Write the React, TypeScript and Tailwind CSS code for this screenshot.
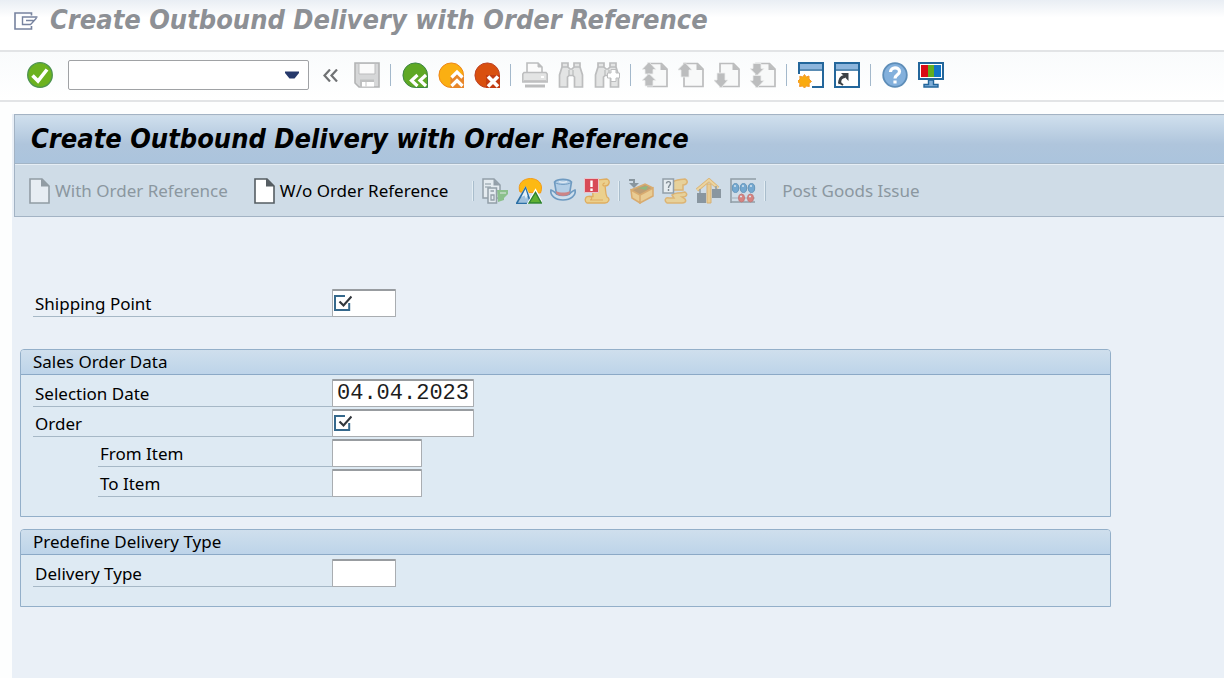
import type { ReactNode } from "react";

const GREY = "#bcbdbe";
const GREY_FILL = "#e3e4e4";

function Icon({ children, faded = false }: { children: ReactNode; faded?: boolean }) {
  return (
    <svg
      viewBox="0 0 26 26"
      aria-hidden="true"
      className={faded ? "block size-[26px] opacity-60" : "block size-[26px]"}
    >
      {children}
    </svg>
  );
}

function MenuIcon() {
  return (
    <svg viewBox="0 0 24 20" aria-hidden="true" className="h-5 w-6" fill="none" stroke="#77839f" strokeWidth="1.6">
      <path d="M17.5 4.500V2H1V18H17.5V15" />
      <path d="M23.5 6H8.500V13.500H16.500L18 12M12 9.500H19.500M18 12L22.500 7" strokeWidth="1.400" />
    </svg>
  );
}

function AcceptIcon() {
  return (
    <Icon>
      <circle cx="13" cy="13" r="12.3" fill="#6cb21f" stroke="#4d9350" strokeWidth="1.3" />
      <path d="M5.5 13.5L11 19L20 7.5" fill="none" stroke="#fff" strokeWidth="3.6" />
    </Icon>
  );
}

function SaveIcon() {
  return (
    <Icon>
      <path d="M1 1H25V25H5L1 21Z" fill="#d6d7d8" stroke="#b3b4b5" strokeWidth="1.6" />
      <path d="M5 1.5H21V12H5Z" fill="#fafafa" stroke="#bcbdbe" />
      <path d="M6 25V17.500H20V25Z" fill="#bfc0c1" />
      <path d="M8 20H20V24.500H8Z" fill="#fff" />
      <path d="M12 20V24.500" stroke="#c3c4c5" />
    </Icon>
  );
}

function BackIcon() {
  return (
    <Icon>
      <path d="M25.500 14A12.300 12.300 0 1 0 14 25.500H25.500Z" fill="#5fa824" stroke="#3d8545" />
      <path d="M15.500 13L9.500 18.500L15.500 24M24 13L18 18.500L24 24" fill="none" stroke="#fff" strokeWidth="3.200" />
    </Icon>
  );
}

function ExitIcon() {
  return (
    <Icon>
      <path d="M25.500 14A12.300 12.300 0 1 0 14 25.500H25.500Z" fill="#fbaf12" stroke="#ee8618" />
      <path d="M12.500 15L19 8L26 15V26H12.500Z" fill="#e8862a" />
      <path d="M13.500 15.500L19 10L24.500 15.500M13.500 24L19 18.500L24.500 24" fill="none" stroke="#fff" strokeWidth="3.200" />
    </Icon>
  );
}

function CancelIcon() {
  return (
    <Icon>
      <path d="M25.500 14A12.300 12.300 0 1 0 14 25.500H25.500Z" fill="#d9500f" stroke="#bd4326" />
      <path d="M12 13H26V26H12Z" fill="#c23c12" />
      <path d="M14 14.500L24 24.500M24 14.500L14 24.500" fill="none" stroke="#fff" strokeWidth="3.600" />
    </Icon>
  );
}

function PrintIcon() {
  return (
    <Icon>
      <path d="M5 11V1H16L20 5V11" fill="#fbfbfb" stroke={GREY} strokeWidth="1.600" />
      <path d="M16 1V5H20" fill={GREY} stroke={GREY} />
      <path d="M2 10.500H24L25.200 12V20H0.800V12Z" fill={GREY_FILL} stroke={GREY} strokeWidth="1.500" />
      <path d="M2 19H24" stroke={GREY} strokeWidth="1.500" />
      <path d="M19 15H22" stroke="#fff" strokeWidth="2" />
      <path d="M3 22.500H23V25.500H3Z" fill={GREY} />
    </Icon>
  );
}

function Binoculars() {
  return (
    <>
      <path
        d="M4 1H10V5L12 7H14L16 5V1H22V5L24.500 13V25H16.500V15L15 13.500H11L9.500 15V25H1.500V13L4 5Z"
        fill={GREY_FILL}
        stroke={GREY}
        strokeWidth="1.700"
      />
      <path d="M4 5H10M16 5H22M11 8V13M15 8V13" stroke={GREY} strokeWidth="1.300" />
    </>
  );
}

function FindIcon() {
  return (
    <Icon>
      <Binoculars />
    </Icon>
  );
}

function FindNextIcon() {
  return (
    <Icon>
      <Binoculars />
      <path d="M17 7.500H22V11H25.500V16H22V19.500H17V16H13.500V11H17Z" fill="#fff" stroke={GREY} />
    </Icon>
  );
}

function PageIcon({ kind }: { kind: "first" | "prev" | "next" | "last" }) {
  return (
    <Icon>
      <path d="M6 1.500H19.500L25 7V24.500H6Z" fill="#f8f9f9" stroke={GREY} strokeWidth="1.700" />
      <path d="M18.500 1V8H25.500Z" fill={GREY} />
      {kind === "first" && (
        <path
          d="M0 7.500L7 0L14 7.500H11V12H3V7.500ZM0 18.500L7 11.500L14 18.500H11V24H3V18.500Z"
          fill={GREY}
          stroke="#eceded"
          strokeWidth="0.800"
        />
      )}
      {kind === "prev" && <path d="M-0.500 8L7 0.500L14 8H11V15H3V8Z" fill={GREY} stroke="#eceded" strokeWidth="0.800" />}
      {kind === "next" && <path d="M-0.500 18L7 26L14 18H11V11H3V18Z" fill={GREY} stroke="#eceded" strokeWidth="0.800" />}
      {kind === "last" && (
        <path
          d="M0 6.500H3V1.500H11V6.500H14L7 13.500ZM0 18.500H3V13.500H11V18.500H14L7 26Z"
          fill={GREY}
          stroke="#eceded"
          strokeWidth="0.800"
        />
      )}
    </Icon>
  );
}

function SessionIcon() {
  return (
    <Icon>
      <path d="M1 1H25V25H1Z" fill="#fff" stroke="#23669b" strokeWidth="2" />
      <path d="M2 2H24V7H2Z" fill="#8db5dc" />
      <path d="M1 8H25" stroke="#23669b" strokeWidth="1.500" />
      <path d="M0 12H14V26H0Z" fill="#fff" />
      <path
        d="M6.500 12.500L8.200 15L11 14L11 17L13.500 19.500L11 21.500L11.300 24.500L8.300 24L6.500 26L4.500 24L1.500 24.500L2 21.500L-0.500 19.500L2 17L1.800 14.200L4.800 15Z"
        fill="#f9aa10"
        stroke="#f3982a"
      />
    </Icon>
  );
}

function ShortcutIcon() {
  return (
    <Icon>
      <path d="M1 1H25V25H1Z" fill="#fff" stroke="#23669b" strokeWidth="2" />
      <path d="M2 2H24V7H2Z" fill="#8db5dc" />
      <path d="M1 8H25" stroke="#23669b" strokeWidth="1.500" />
      <path d="M6 22C5 18 7 14.500 11 14.500" fill="none" stroke="#3c4146" strokeWidth="3" />
      <path d="M7 11H14.500V19Z" fill="#3c4146" />
      <path d="M4.500 20L9 23" stroke="#3c4146" strokeWidth="2" />
    </Icon>
  );
}

function HelpIcon() {
  return (
    <Icon>
      <circle cx="13" cy="13" r="11.800" fill="#83b0dc" stroke="#5d8db8" strokeWidth="1.800" />
      <path d="M8.500 10C8.500 4.500 17.500 4.500 17.500 9.500C17.500 13 13 12.500 13 16.500" fill="none" stroke="#fff" strokeWidth="3.200" />
      <path d="M11.400 18.500H14.600V21.500H11.400Z" fill="#fff" />
    </Icon>
  );
}

function LayoutIcon() {
  return (
    <Icon>
      <path d="M1 1H25V17H1Z" fill="#fff" stroke="#23669b" strokeWidth="2" />
      <path d="M3 3H10V15H3Z" fill="#d90a16" />
      <path d="M10 3H16V15H10Z" fill="#62ad1f" />
      <path d="M16 3H23V15H16Z" fill="#1274c4" />
      <path d="M10.500 18H15.500V22.500H20V25H6V22.500H10.500Z" fill="#7faed8" stroke="#23669b" strokeWidth="1.400" />
    </Icon>
  );
}

function DocumentIcon({ faded = false }: { faded?: boolean }) {
  return (
    <svg viewBox="0 0 21 26" aria-hidden="true" className={faded ? "h-[26px] w-[21px] opacity-50" : "h-[26px] w-[21px]"}>
      <path d="M1 1H13L20 8V25H1Z" fill="#fff" stroke="#565e63" strokeWidth="1.600" />
      <path d="M12 0.500V8.500H20.500Z" fill="#565e63" />
    </svg>
  );
}

function DocumentsIcon() {
  return (
    <Icon faded>
      <path d="M1 1H12L18 7V20H1Z" fill="#f2f5f6" stroke="#6c7880" strokeWidth="1.500" />
      <path d="M11.500 1V7.500H18Z" fill="#6c7880" />
      <path d="M3 6H9M3 9H9" stroke="#8c979d" strokeWidth="1.300" />
      <path d="M15 12H26V16L22 20V22L16 24Z" fill="#5fae50" />
      <path d="M18 15H24" stroke="#cfe6c6" strokeWidth="1.300" />
      <path d="M6 10H14.500V25H6Z" fill="#f2f5f6" stroke="#6c7880" strokeWidth="1.500" />
      <path d="M8.500 13H12M9 17V22H12V17Z" fill="none" stroke="#6c7880" strokeWidth="1.300" />
    </Icon>
  );
}

function LandscapeIcon() {
  return (
    <Icon>
      <path d="M4 14C1 6 7 0.500 14.500 0.500C22 0.500 28 6 24.500 15Z" fill="#fdb913" stroke="#f39a16" />
      <path d="M0 25.500L9.500 8L18 25.500Z" fill="#e8eef0" />
      <path d="M0.500 25.500L9.500 10L15 25.500Z" fill="#9fc1de" stroke="#2b6fa5" strokeWidth="1.700" />
      <path d="M9.500 11L5.500 19L8.500 17.500L10 21L11.500 17.500Z" fill="#e4f0f8" />
      <path d="M13 25L19.500 13.500L25.500 25Z" fill="#5fb032" stroke="#fff" strokeWidth="3" />
      <path d="M13 25L19.500 14.500L25.300 25Z" fill="#5fb032" stroke="#2d8230" strokeWidth="1.400" />
    </Icon>
  );
}

function HatIcon() {
  return (
    <Icon faded>
      <path
        d="M1 12C4 13 5 15 7 16H19C21 15 22 13 25 12C26.500 17 21 22 13 22C5 22 -0.500 17 1 12Z"
        fill="#cfe2f2"
        stroke="#2e6fa8"
        strokeWidth="1.600"
      />
      <path d="M6.500 16L4.500 4C8 0.500 18 0.500 21.500 4L19.500 16C16 18 10 18 6.500 16Z" fill="#a2c6e6" stroke="#2e6fa8" strokeWidth="1.600" />
      <path d="M6 13C10 15 16 15 20 13L19.500 16C16 18.500 10 18.500 6.500 16Z" fill="#cc4b46" />
      <path d="M4.500 4.500C9 7 17 7 21.500 4.500" fill="none" stroke="#2e6fa8" />
      <path d="M9 3.500C11 4.500 15 4.500 17 3.500" fill="none" stroke="#e9f3fb" strokeWidth="1.400" />
    </Icon>
  );
}

function Scroll() {
  return (
    <>
      <path
        d="M8 4C11 1 15 2 23 1C27 3 25 8 21 8C22 12 21 15 23 19C27 21 24 25 21 25H3C0 23 1 18 5 18.500H9Z"
        fill="#f8cb68"
        stroke="#e69a28"
        strokeWidth="1.300"
      />
      <path d="M5 18.500C9 18 8 22 6 22H19M20.500 8C18 8 18.500 5 21 5" fill="none" stroke="#e69a28" strokeWidth="1.200" />
    </>
  );
}

function IncompleteIcon() {
  return (
    <Icon>
      <g opacity="0.7">
        <Scroll />
      </g>
      <path d="M0.500 0.500H14.500V14.500H0.500Z" fill="#d84a57" stroke="#e9c5cb" />
      <path d="M7.500 2.500V9M7.500 10.500V13" stroke="#fff" strokeWidth="2.400" />
    </Icon>
  );
}

function PackIcon() {
  return (
    <Icon faded>
      <path d="M3 12L17 6L25 10L12 17Z" fill="#b0762a" />
      <path d="M3 12L12 17V25L4 20ZM12 17L25 10V18L12 25Z" fill="#fbc25c" stroke="#df8b20" strokeWidth="1.500" />
      <path d="M3 12L17 6L25 10" fill="none" stroke="#df8b20" strokeWidth="1.500" />
      <path d="M10 10L18 12L20 8" fill="#65a23b" />
      <path d="M1 2H6V6" fill="none" stroke="#5a666e" strokeWidth="2" />
      <path d="M1 5H11L6 10Z" fill="#5a666e" />
    </Icon>
  );
}

function DocumentFlowIcon() {
  return (
    <Icon faded>
      <path d="M10 5C13 1 17 2 23 1C27 3 25 7 21 7V12H10Z" fill="#f8cb68" stroke="#e69a28" strokeWidth="1.500" />
      <path d="M10 17C13 14 15 16 23 14C26 16 25 19 20 19L23 21C25 24 22 25 20 25H5C2 23 3 19 7 20H12Z" fill="#f8cb68" stroke="#e69a28" strokeWidth="1.500" />
      <path d="M1 1H11.500V15H1Z" fill="#f5f7f7" stroke="#6c7880" strokeWidth="1.500" />
      <path d="M4.500 5.500C4.500 3 8.500 3 8.500 5.500C8.500 7.500 6.500 7 6.500 10M6.500 11V13" fill="none" stroke="#4b555b" strokeWidth="1.400" />
    </Icon>
  );
}

function WarehouseIcon() {
  return (
    <Icon faded>
      <path d="M1 12L13 2L22 10" fill="none" stroke="#e59c2a" strokeWidth="3.600" />
      <path d="M1 12L13 2L22 10" fill="none" stroke="#ffd071" strokeWidth="1.800" />
      <path d="M11 6H15V25H11Z" fill="#fac35c" stroke="#df9528" />
      <path d="M1 15H10V25H1ZM16 11H25V20H16Z" fill="#5c6972" />
      <path d="M4 15V11M20 11V8" stroke="#66737c" strokeWidth="1.500" />
    </Icon>
  );
}

function AbacusIcon() {
  return (
    <Icon faded>
      <path d="M1 25V1H26M1 24H25" fill="none" stroke="#69757d" strokeWidth="1.600" />
      <path d="M1 10H25M1 20H25" stroke="#87939b" />
      {[5.5, 13.5, 21.5].map((x) => (
        <ellipse key={x} cx={x} cy="10" rx="3.200" ry="4.500" fill="#3987c2" stroke="#236a9e" />
      ))}
      {[11.5, 20.5].map((x) => (
        <ellipse key={x} cx={x} cy="20" rx="3" ry="4" fill="#dd4b3e" stroke="#b93c37" />
      ))}
      <path d="M4 8H6M12 8H14M20 8H22M10 18.500H12M19 18.500H21" stroke="#d8ebf6" strokeWidth="1.500" />
    </Icon>
  );
}

function RequiredMark() {
  return (
    <svg viewBox="0 0 18 16" aria-hidden="true" className="pointer-events-none absolute top-[6px] left-[2px] h-4 w-[18px]" fill="none">
      <path d="M11 1H1V15H15.200V8" stroke="#35688c" strokeWidth="2" />
      <path d="M5.500 6.500L9.500 10.500L17.500 1.500" stroke="#32373d" strokeWidth="2.200" />
    </svg>
  );
}

function ToolButton({ label, disabled = false, children }: { label: string; disabled?: boolean; children: ReactNode }) {
  return (
    <button type="button" aria-label={label} disabled={disabled} className="shrink-0">
      {children}
    </button>
  );
}

function Separator() {
  return <div className="h-[22px] w-[2px] shrink-0 border-l border-[#a3b8cb]" />;
}

function BarSeparator() {
  return <div className="h-5 w-[2px] shrink-0 border-r border-l border-r-[#a9bdcc] border-l-[#e3edf3]" />;
}

type FieldProps = {
  id: string;
  label: string;
  width: string;
  indent?: boolean;
  required?: boolean;
  value?: string;
};

function Field({ id, label, width, indent = false, required = false, value }: FieldProps) {
  return (
    <div className="flex h-7">
      <label
        htmlFor={id}
        className={
          indent
            ? "ml-[65px] h-7 w-[234px] shrink-0 border-b border-[#a6b8c6] pl-[2px] leading-[30px]"
            : "h-7 w-[299px] shrink-0 border-b border-[#a6b8c6] pl-[2px] leading-[30px]"
        }
      >
        {label}
      </label>
      <div className={`relative h-7 ${width}`}>
        <input
          id={id}
          type="text"
          required={required}
          defaultValue={value}
          className="block h-7 w-full rounded-[1px] border border-t-2 border-[#a9adb1] border-t-[#989ca0] bg-white px-1 font-['Liberation_Mono',monospace] text-[22px] leading-6 text-[#1c1c1c] outline-none"
        />
        {required && <RequiredMark />}
      </div>
    </div>
  );
}

function Group({ title, children }: { title: string; children: ReactNode }) {
  return (
    <section className="w-full max-w-[1091px] rounded-t-[4px] border border-[#93afc9] bg-[#deeaf3]">
      <h2 className="h-[25px] rounded-t-[3px] border-b border-[#8ba9c6] bg-linear-to-b from-[#cfdfed] to-[#bdd4e9] pl-3 leading-6">
        {title}
      </h2>
      <div className="flex flex-col gap-[2px] px-3 pt-1 pb-[19px]">{children}</div>
    </section>
  );
}

export default function App() {
  return (
    <div className="flex min-h-screen flex-col bg-[#fdfefe] font-['Noto_Sans',sans-serif] text-[17px] text-black">
      <header className="flex h-[52px] items-start gap-3 border-b-2 border-[#e2e4e6] bg-linear-to-b from-[#e9eef4] to-white to-35% pl-[14px]">
        <button type="button" aria-label="System menu" className="mt-[11px] shrink-0">
          <MenuIcon />
        </button>
        <div className="font-['DejaVu_Sans_Condensed','DejaVu_Sans',sans-serif] text-[27px] leading-10 font-bold whitespace-nowrap text-[#8d9095] italic">
          Create Outbound Delivery with Order Reference
        </div>
      </header>

      <div className="flex h-[50px] items-center gap-[10px] border-b-2 border-[#e2e4e6] bg-linear-to-b from-[#f9fbfc] to-white pb-[2px] pl-[27px]">
        <ToolButton label="Enter"><AcceptIcon /></ToolButton>
        <div className="ml-[5px] flex h-[30px] w-[241px] shrink-0 items-center rounded-[2px] border border-[#a0a2a5] bg-white">
          <input type="text" aria-label="Command" className="h-full min-w-0 flex-1 px-2 outline-none" />
          <button type="button" aria-label="Command history" className="mr-[9px]">
            <svg viewBox="0 0 14 8" aria-hidden="true" className="h-2 w-[14px]">
              <path d="M0 0.500H14V2L9.500 7.500H4.500L0 2Z" fill="#26396b" />
            </svg>
          </button>
        </div>
        <button type="button" aria-label="Hide command field" className="mr-[6px] ml-[4px] shrink-0">
          <svg viewBox="0 0 15 13" aria-hidden="true" className="h-[13px] w-[15px]" fill="none" stroke="#707274" strokeWidth="2.200">
            <path d="M7 0.500L1.500 6.500L7 12.500M14 0.500L8.500 6.500L14 12.500" />
          </svg>
        </button>
        <ToolButton label="Save" disabled><SaveIcon /></ToolButton>
        <Separator />
        <ToolButton label="Back"><BackIcon /></ToolButton>
        <ToolButton label="Exit"><ExitIcon /></ToolButton>
        <ToolButton label="Cancel"><CancelIcon /></ToolButton>
        <Separator />
        <ToolButton label="Print" disabled><PrintIcon /></ToolButton>
        <ToolButton label="Find" disabled><FindIcon /></ToolButton>
        <ToolButton label="Find next" disabled><FindNextIcon /></ToolButton>
        <Separator />
        <ToolButton label="First page" disabled><PageIcon kind="first" /></ToolButton>
        <ToolButton label="Previous page" disabled><PageIcon kind="prev" /></ToolButton>
        <ToolButton label="Next page" disabled><PageIcon kind="next" /></ToolButton>
        <ToolButton label="Last page" disabled><PageIcon kind="last" /></ToolButton>
        <Separator />
        <ToolButton label="New session"><SessionIcon /></ToolButton>
        <ToolButton label="Create shortcut"><ShortcutIcon /></ToolButton>
        <Separator />
        <ToolButton label="Help"><HelpIcon /></ToolButton>
        <ToolButton label="Customize layout"><LayoutIcon /></ToolButton>
      </div>

      <main className="mt-3 ml-3 flex-1 bg-[#eaf0f7]">
        <div className="ml-[2px] border-y border-l border-[#a3b3c4] bg-[#cfdce7] pt-px">
          <h1 className="h-12 border-b border-[#a3b5c6] bg-linear-to-b from-[#cfdfed] via-[#afc5dc] via-60% to-[#abc4dd] pl-4 font-['DejaVu_Sans_Condensed','DejaVu_Sans',sans-serif] text-[27px] leading-[46px] font-bold whitespace-nowrap italic">
            Create Outbound Delivery with Order Reference
          </h1>
          <div className="flex h-[52px] items-center gap-2 border-t border-[#e6eef5] pl-[14px] whitespace-nowrap">
            <button type="button" disabled className="flex items-center gap-[5px] text-[#8b97a0]">
              <DocumentIcon faded />
              With Order Reference
            </button>
            <button type="button" className="ml-[18px] flex items-center gap-[5px]">
              <DocumentIcon />
              W/o Order Reference
            </button>
            <div className="ml-4 flex items-center gap-2">
              <BarSeparator />
              <ToolButton label="Subsequent documents" disabled><DocumentsIcon /></ToolButton>
              <ToolButton label="Header overview"><LandscapeIcon /></ToolButton>
              <ToolButton label="Header details" disabled><HatIcon /></ToolButton>
              <ToolButton label="Incompletion log" disabled><IncompleteIcon /></ToolButton>
              <BarSeparator />
              <ToolButton label="Pack" disabled><PackIcon /></ToolButton>
              <ToolButton label="Document flow" disabled><DocumentFlowIcon /></ToolButton>
              <ToolButton label="Storage locations" disabled><WarehouseIcon /></ToolButton>
              <ToolButton label="Batch split" disabled><AbacusIcon /></ToolButton>
              <BarSeparator />
            </div>
            <button type="button" disabled className="ml-2 text-[#8b97a0]">Post Goods Issue</button>
          </div>
        </div>

        <form className="flex flex-col gap-3 pt-[72px] pr-4 pb-6 pl-2">
          <div className="mb-5 pl-[13px]">
            <Field id="shipping-point" label="Shipping Point" width="w-16" required />
          </div>
          <Group title="Sales Order Data">
            <Field id="selection-date" label="Selection Date" width="w-[142px]" value="04.04.2023" />
            <Field id="order" label="Order" width="w-[142px]" required />
            <Field id="from-item" label="From Item" width="w-[90px]" indent />
            <Field id="to-item" label="To Item" width="w-[90px]" indent />
          </Group>
          <Group title="Predefine Delivery Type">
            <Field id="delivery-type" label="Delivery Type" width="w-16" />
          </Group>
        </form>
      </main>
    </div>
  );
}
